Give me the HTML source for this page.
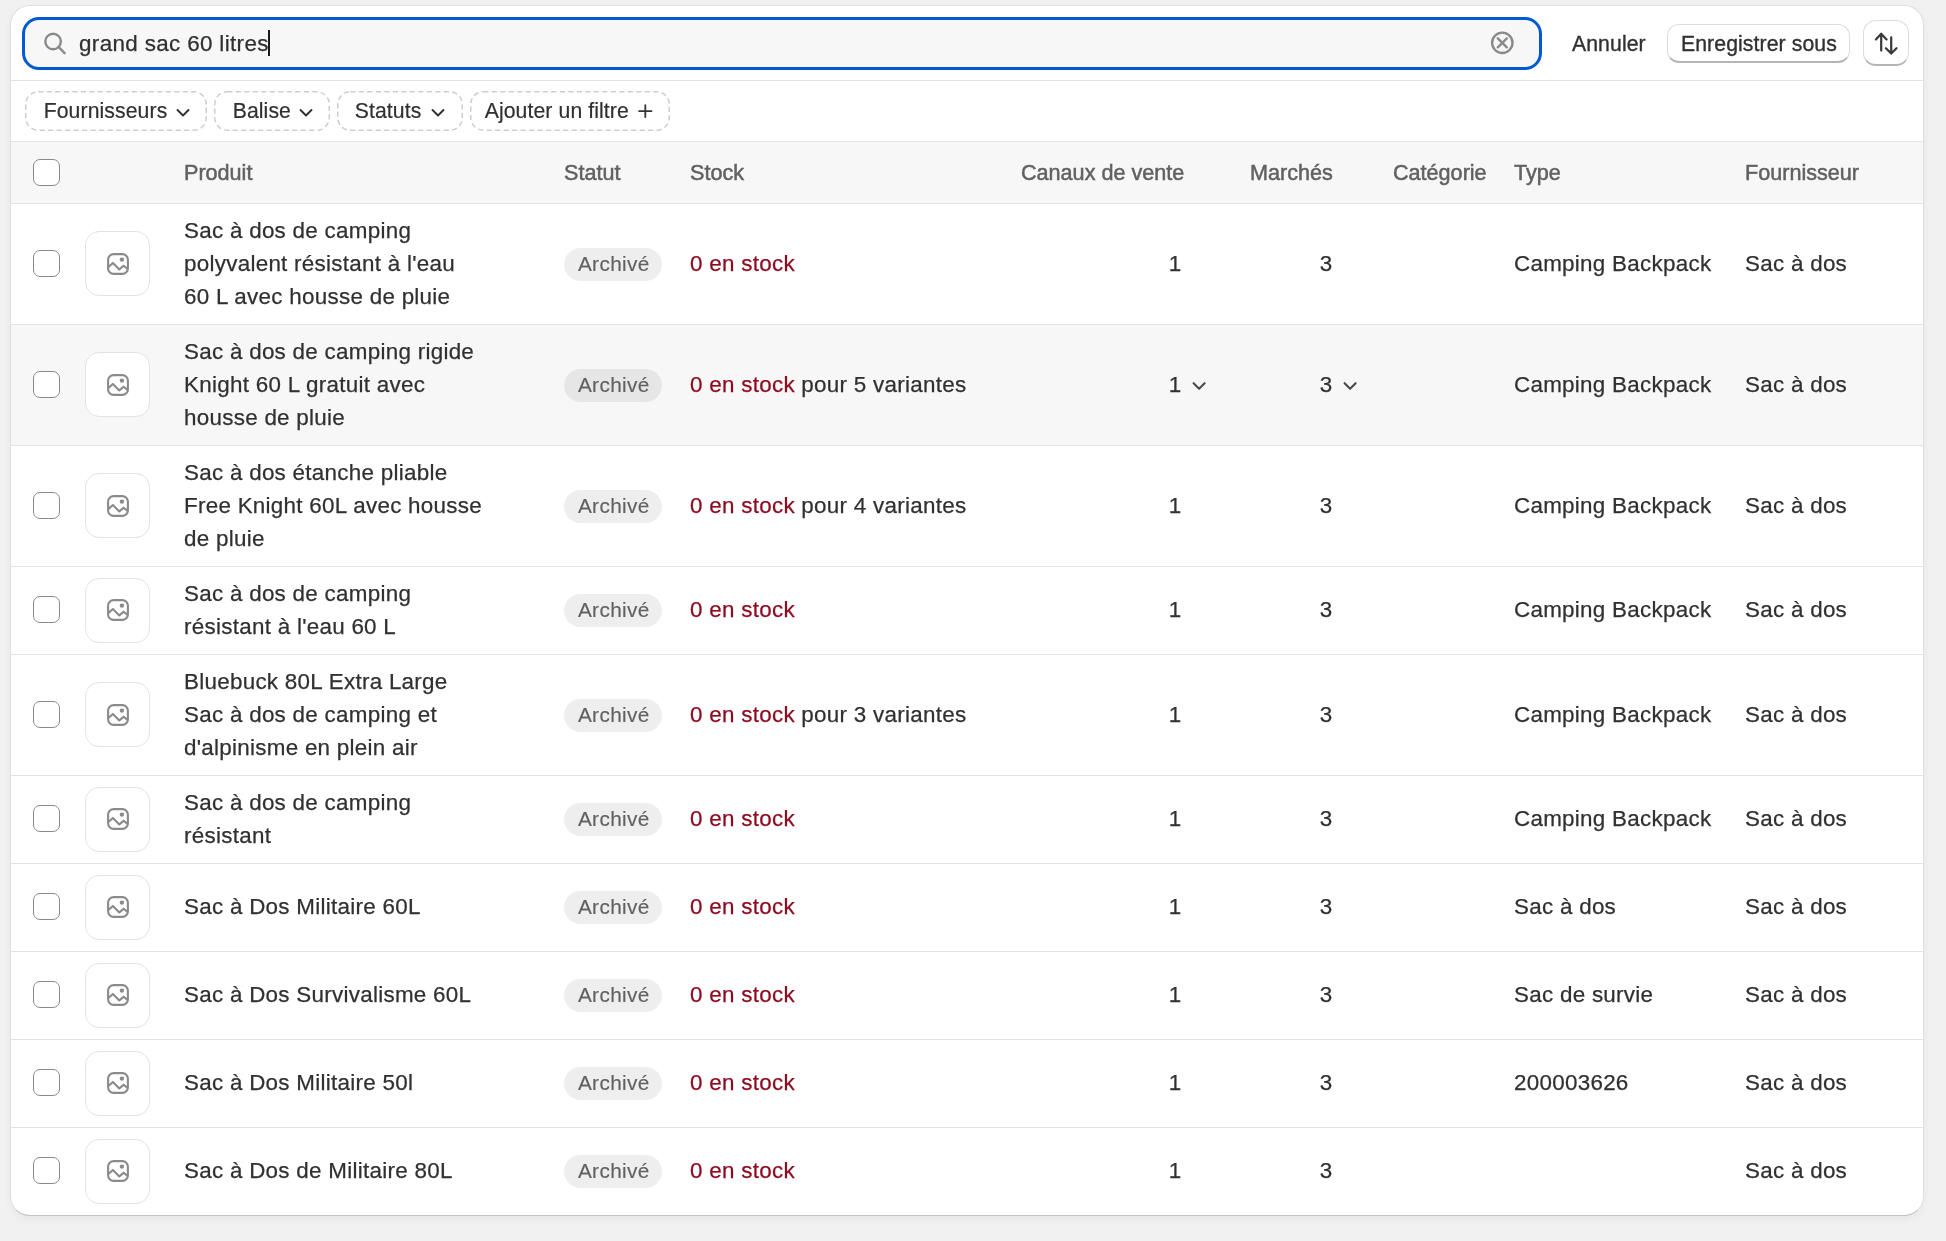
<!DOCTYPE html>
<html><head><meta charset="utf-8"><title>Produits</title>
<style>
html,body{margin:0;padding:0;}
body{width:1946px;height:1241px;background:#f1f1f1;position:relative;overflow:hidden;font-family:"Liberation Sans",sans-serif;color:#303030;}
.card{position:absolute;left:10px;top:5px;width:1914px;height:1211px;background:#fff;border-radius:20px;box-sizing:border-box;border:1.3px solid #dfdfdf;border-bottom:1.6px solid #c4c4c4;box-shadow:0 4px 9px rgba(0,0,0,0.045);overflow:hidden;}
.abs{position:absolute;}
.t{position:absolute;font-size:22.4px;letter-spacing:0.28px;line-height:33px;white-space:nowrap;color:#303030;-webkit-text-stroke:0.25px #303030;}
.crit{-webkit-text-stroke-color:#8e0b21;}
.prod{left:184px;}
.crit{color:#8e0b21;}
.row{position:absolute;left:11px;width:1912px;border-top:1px solid #e3e3e3;}
.row.hov{background:#f7f7f7;}
.cb{position:absolute;left:33px;width:27px;height:27px;box-sizing:border-box;border:1.7px solid #8a8a8a;border-radius:7px;background:#fff;}
.th{position:absolute;left:85px;width:65px;height:65px;box-sizing:border-box;border:1.6px solid #e3e3e3;border-radius:14px;background:#fff;}
.th svg{position:absolute;left:21px;top:20.5px;}
.badge{position:absolute;left:564px;width:98px;height:33px;border-radius:16.5px;background:rgba(0,0,0,0.065);color:#616161;font-size:20.8px;letter-spacing:0.35px;line-height:31px;text-align:center;text-indent:1.6px;-webkit-text-stroke:0.15px #616161;}
.badge.bh{}
.num{width:30px;text-align:center;}
.ic{position:absolute;line-height:0;}
.hd{position:absolute;font-size:21.6px;letter-spacing:0px;line-height:33px;white-space:nowrap;color:#616161;-webkit-text-stroke:0.5px #616161;}
.pill{position:absolute;top:91px;height:40px;box-sizing:border-box;border:1.6px dashed #d0d0d0;border-radius:14px;}
.s{position:absolute;font-size:21.2px;letter-spacing:0.1px;line-height:30px;white-space:nowrap;color:#303030;-webkit-text-stroke:0.2px #303030;}
#wrap{position:absolute;left:0;top:0;width:1946px;height:1241px;will-change:transform;}
</style></head><body><div id="wrap">
<div class="card"></div>
<!-- search bar -->
<div class="abs" style="left:22px;top:17px;width:1520px;height:53px;box-sizing:border-box;border:3.2px solid #005bd3;border-radius:17px;background:#f7f7f7;"></div>
<svg class="abs" style="left:40px;top:28px" width="30" height="30" viewBox="0 0 30 30" fill="none" stroke="#8a8a8a" stroke-width="2.4" stroke-linecap="round"><circle cx="13.1" cy="13.5" r="7.75"/><path d="M18.8 19.2 L24.6 25.1"/></svg>
<div class="t" style="left:79px;top:26.8px;letter-spacing:0.36px">grand sac 60 litres</div>
<div class="abs" style="left:268px;top:30px;width:1.5px;height:25.5px;background:#1a1a1a;"></div>
<svg class="abs" style="left:1489px;top:30px" width="26" height="26" viewBox="0 0 26 26" fill="none" stroke="#8a8a8a" stroke-width="2.4" stroke-linecap="round"><circle cx="13.3" cy="12.8" r="10.2"/><path d="M8.8 8.3 L17.8 17.3 M17.8 8.3 L8.8 17.3"/></svg>
<div class="s" style="left:1572px;top:29px;-webkit-text-stroke:0.35px #303030;">Annuler</div>
<div class="abs" style="left:1667px;top:24px;width:183px;height:39px;box-sizing:border-box;border:1.4px solid #dcdcdc;border-bottom:2.4px solid #b5b5b5;border-radius:12px;background:#fff;"></div>
<div class="s" style="left:1681px;top:29px;-webkit-text-stroke:0.35px #303030;">Enregistrer sous</div>
<div class="abs" style="left:1863px;top:20px;width:46px;height:46px;box-sizing:border-box;border:1.4px solid #dcdcdc;border-bottom:2.4px solid #b5b5b5;border-radius:13px;background:#fff;"></div>
<svg class="abs" style="left:1866px;top:23.8px" width="40" height="40" viewBox="0 0 40 40" fill="none" stroke="#383838" stroke-width="2.2" stroke-linecap="round" stroke-linejoin="round"><path d="M15.2 26.6 V9.8 M9.9 15.4 L15.2 9.8 L20.6 15.4"/><path d="M25.2 13.4 V29.6 M19.9 24.2 L25.2 29.6 L30.5 24.2"/></svg>
<!-- divider -->
<div class="abs" style="left:11px;top:80px;width:1912px;height:1px;background:#e3e3e3;"></div>
<!-- filter pills -->
<svg class="abs" style="left:25px;top:91px" width="182" height="40" viewBox="0 0 182 40" fill="none"><rect x="0.75" y="0.75" width="180.5" height="38.5" rx="12.5" stroke="#cdcdcd" stroke-width="1.5" stroke-dasharray="5.2 3.3"/></svg>
<div class="s" style="left:43.7px;top:95.5px;">Fournisseurs</div>
<svg class="abs" style="left:175px;top:105.85px" width="16" height="14" viewBox="0 0 16 14" fill="none" stroke="#303030" stroke-width="1.9" stroke-linecap="round" stroke-linejoin="round"><path d="M2.5 4 L8 9.5 L13.5 4"/></svg>
<svg class="abs" style="left:214px;top:91px" width="116" height="40" viewBox="0 0 116 40" fill="none"><rect x="0.75" y="0.75" width="114.5" height="38.5" rx="12.5" stroke="#cdcdcd" stroke-width="1.5" stroke-dasharray="5.2 3.3"/></svg>
<div class="s" style="left:232.7px;top:95.5px;">Balise</div>
<svg class="abs" style="left:298px;top:105.85px" width="16" height="14" viewBox="0 0 16 14" fill="none" stroke="#303030" stroke-width="1.9" stroke-linecap="round" stroke-linejoin="round"><path d="M2.5 4 L8 9.5 L13.5 4"/></svg>
<svg class="abs" style="left:337px;top:91px" width="126" height="40" viewBox="0 0 126 40" fill="none"><rect x="0.75" y="0.75" width="124.5" height="38.5" rx="12.5" stroke="#cdcdcd" stroke-width="1.5" stroke-dasharray="5.2 3.3"/></svg>
<div class="s" style="left:354.7px;top:95.5px;">Statuts</div>
<svg class="abs" style="left:430px;top:105.85px" width="16" height="14" viewBox="0 0 16 14" fill="none" stroke="#303030" stroke-width="1.9" stroke-linecap="round" stroke-linejoin="round"><path d="M2.5 4 L8 9.5 L13.5 4"/></svg>
<svg class="abs" style="left:470px;top:91px" width="200" height="40" viewBox="0 0 200 40" fill="none"><rect x="0.75" y="0.75" width="198.5" height="38.5" rx="12.5" stroke="#cdcdcd" stroke-width="1.5" stroke-dasharray="5.2 3.3"/></svg>
<div class="s" style="left:484.7px;top:95.5px;">Ajouter un filtre</div>
<svg class="abs" style="left:636px;top:103px" width="18" height="18" viewBox="0 0 18 18" fill="none" stroke="#333" stroke-width="1.8" stroke-linecap="round"><path d="M9.3 2.1 V14.1 M3.1 8.1 H15.5"/></svg>
<!-- header -->
<div class="abs" style="left:11px;top:141px;width:1912px;height:62px;background:#f7f7f7;border-top:1px solid #e3e3e3;"></div>
<div class="cb" style="top:159px"></div>
<div class="hd" style="left:184px;top:156px;">Produit</div>
<div class="hd" style="left:564px;top:156px;">Statut</div>
<div class="hd" style="left:690px;top:156px;">Stock</div>
<div class="hd" style="left:1021px;top:156px;">Canaux de vente</div>
<div class="hd" style="left:1250px;top:156px;">Marchés</div>
<div class="hd" style="left:1393px;top:156px;">Catégorie</div>
<div class="hd" style="left:1514px;top:156px;">Type</div>
<div class="hd" style="left:1745px;top:156px;">Fournisseur</div>
<div class='row' style='top:203px;height:120px;'></div>
<div class='cb' style='top:249.7px'></div>
<div class='th' style='top:231.0px'><svg width="22" height="22" viewBox="0 0 22 22" fill="none" stroke="#8a8a8a" stroke-width="2.1" stroke-linejoin="round" stroke-linecap="round"><rect x="1.1" y="1.1" width="19.8" height="19.8" rx="5.5"/><path d="M2 13.6 L5.9 10 L12.3 16.4 L16.6 12.7 L20 15.4"/><circle cx="14.9" cy="6.6" r="2.2" fill="#8a8a8a" stroke="none"/></svg></div>
<div class='t prod' style='top:213.9px'>Sac à dos de camping<br>polyvalent résistant à l&#39;eau<br>60 L avec housse de pluie</div>
<div class='badge' style='top:247.5px'>Archivé</div>
<div class='t' style='left:690px;top:246.9px'><span class='crit'>0 en stock</span></div>
<div class='t num' style='left:1160px;top:246.9px'>1</div>
<div class='t num' style='left:1311px;top:246.9px'>3</div>
<div class='t' style='left:1514px;top:246.9px'>Camping Backpack</div>
<div class='t' style='left:1745px;top:246.9px'>Sac à dos</div>
<div class='row hov' style='top:324px;height:120px;'></div>
<div class='cb' style='top:370.7px'></div>
<div class='th' style='top:352.0px'><svg width="22" height="22" viewBox="0 0 22 22" fill="none" stroke="#8a8a8a" stroke-width="2.1" stroke-linejoin="round" stroke-linecap="round"><rect x="1.1" y="1.1" width="19.8" height="19.8" rx="5.5"/><path d="M2 13.6 L5.9 10 L12.3 16.4 L16.6 12.7 L20 15.4"/><circle cx="14.9" cy="6.6" r="2.2" fill="#8a8a8a" stroke="none"/></svg></div>
<div class='t prod' style='top:334.9px'>Sac à dos de camping rigide<br>Knight 60 L gratuit avec<br>housse de pluie</div>
<div class='badge bh' style='top:368.5px'>Archivé</div>
<div class='t' style='left:690px;top:367.9px'><span class='crit'>0 en stock</span> pour 5 variantes</div>
<div class='t num' style='left:1160px;top:367.9px'>1</div>
<div class='t num' style='left:1311px;top:367.9px'>3</div>
<div class='ic' style='left:1192px;top:380.5px'><svg width="16" height="11" viewBox="0 0 16 11" fill="none" stroke="#4a4a4a" stroke-width="2.1" stroke-linecap="round" stroke-linejoin="round"><path d="M1.6 2.2 L7.1 7.7 L12.6 2.2"/></svg></div>
<div class='ic' style='left:1343px;top:380.5px'><svg width="16" height="11" viewBox="0 0 16 11" fill="none" stroke="#4a4a4a" stroke-width="2.1" stroke-linecap="round" stroke-linejoin="round"><path d="M1.6 2.2 L7.1 7.7 L12.6 2.2"/></svg></div>
<div class='t' style='left:1514px;top:367.9px'>Camping Backpack</div>
<div class='t' style='left:1745px;top:367.9px'>Sac à dos</div>
<div class='row' style='top:445px;height:120px;'></div>
<div class='cb' style='top:491.7px'></div>
<div class='th' style='top:473.0px'><svg width="22" height="22" viewBox="0 0 22 22" fill="none" stroke="#8a8a8a" stroke-width="2.1" stroke-linejoin="round" stroke-linecap="round"><rect x="1.1" y="1.1" width="19.8" height="19.8" rx="5.5"/><path d="M2 13.6 L5.9 10 L12.3 16.4 L16.6 12.7 L20 15.4"/><circle cx="14.9" cy="6.6" r="2.2" fill="#8a8a8a" stroke="none"/></svg></div>
<div class='t prod' style='top:455.9px'>Sac à dos étanche pliable<br>Free Knight 60L avec housse<br>de pluie</div>
<div class='badge' style='top:489.5px'>Archivé</div>
<div class='t' style='left:690px;top:488.9px'><span class='crit'>0 en stock</span> pour 4 variantes</div>
<div class='t num' style='left:1160px;top:488.9px'>1</div>
<div class='t num' style='left:1311px;top:488.9px'>3</div>
<div class='t' style='left:1514px;top:488.9px'>Camping Backpack</div>
<div class='t' style='left:1745px;top:488.9px'>Sac à dos</div>
<div class='row' style='top:566px;height:87px;'></div>
<div class='cb' style='top:596.2px'></div>
<div class='th' style='top:577.5px'><svg width="22" height="22" viewBox="0 0 22 22" fill="none" stroke="#8a8a8a" stroke-width="2.1" stroke-linejoin="round" stroke-linecap="round"><rect x="1.1" y="1.1" width="19.8" height="19.8" rx="5.5"/><path d="M2 13.6 L5.9 10 L12.3 16.4 L16.6 12.7 L20 15.4"/><circle cx="14.9" cy="6.6" r="2.2" fill="#8a8a8a" stroke="none"/></svg></div>
<div class='t prod' style='top:576.9px'>Sac à dos de camping<br>résistant à l&#39;eau 60 L</div>
<div class='badge' style='top:594.0px'>Archivé</div>
<div class='t' style='left:690px;top:593.4px'><span class='crit'>0 en stock</span></div>
<div class='t num' style='left:1160px;top:593.4px'>1</div>
<div class='t num' style='left:1311px;top:593.4px'>3</div>
<div class='t' style='left:1514px;top:593.4px'>Camping Backpack</div>
<div class='t' style='left:1745px;top:593.4px'>Sac à dos</div>
<div class='row' style='top:654px;height:120px;'></div>
<div class='cb' style='top:700.7px'></div>
<div class='th' style='top:682.0px'><svg width="22" height="22" viewBox="0 0 22 22" fill="none" stroke="#8a8a8a" stroke-width="2.1" stroke-linejoin="round" stroke-linecap="round"><rect x="1.1" y="1.1" width="19.8" height="19.8" rx="5.5"/><path d="M2 13.6 L5.9 10 L12.3 16.4 L16.6 12.7 L20 15.4"/><circle cx="14.9" cy="6.6" r="2.2" fill="#8a8a8a" stroke="none"/></svg></div>
<div class='t prod' style='top:664.9px'>Bluebuck 80L Extra Large<br>Sac à dos de camping et<br>d&#39;alpinisme en plein air</div>
<div class='badge' style='top:698.5px'>Archivé</div>
<div class='t' style='left:690px;top:697.9px'><span class='crit'>0 en stock</span> pour 3 variantes</div>
<div class='t num' style='left:1160px;top:697.9px'>1</div>
<div class='t num' style='left:1311px;top:697.9px'>3</div>
<div class='t' style='left:1514px;top:697.9px'>Camping Backpack</div>
<div class='t' style='left:1745px;top:697.9px'>Sac à dos</div>
<div class='row' style='top:775px;height:87px;'></div>
<div class='cb' style='top:805.2px'></div>
<div class='th' style='top:786.5px'><svg width="22" height="22" viewBox="0 0 22 22" fill="none" stroke="#8a8a8a" stroke-width="2.1" stroke-linejoin="round" stroke-linecap="round"><rect x="1.1" y="1.1" width="19.8" height="19.8" rx="5.5"/><path d="M2 13.6 L5.9 10 L12.3 16.4 L16.6 12.7 L20 15.4"/><circle cx="14.9" cy="6.6" r="2.2" fill="#8a8a8a" stroke="none"/></svg></div>
<div class='t prod' style='top:785.9px'>Sac à dos de camping<br>résistant</div>
<div class='badge' style='top:803.0px'>Archivé</div>
<div class='t' style='left:690px;top:802.4px'><span class='crit'>0 en stock</span></div>
<div class='t num' style='left:1160px;top:802.4px'>1</div>
<div class='t num' style='left:1311px;top:802.4px'>3</div>
<div class='t' style='left:1514px;top:802.4px'>Camping Backpack</div>
<div class='t' style='left:1745px;top:802.4px'>Sac à dos</div>
<div class='row' style='top:863px;height:87px;'></div>
<div class='cb' style='top:893.2px'></div>
<div class='th' style='top:874.5px'><svg width="22" height="22" viewBox="0 0 22 22" fill="none" stroke="#8a8a8a" stroke-width="2.1" stroke-linejoin="round" stroke-linecap="round"><rect x="1.1" y="1.1" width="19.8" height="19.8" rx="5.5"/><path d="M2 13.6 L5.9 10 L12.3 16.4 L16.6 12.7 L20 15.4"/><circle cx="14.9" cy="6.6" r="2.2" fill="#8a8a8a" stroke="none"/></svg></div>
<div class='t prod' style='top:890.4px'>Sac à Dos Militaire 60L</div>
<div class='badge' style='top:891.0px'>Archivé</div>
<div class='t' style='left:690px;top:890.4px'><span class='crit'>0 en stock</span></div>
<div class='t num' style='left:1160px;top:890.4px'>1</div>
<div class='t num' style='left:1311px;top:890.4px'>3</div>
<div class='t' style='left:1514px;top:890.4px'>Sac à dos</div>
<div class='t' style='left:1745px;top:890.4px'>Sac à dos</div>
<div class='row' style='top:951px;height:87px;'></div>
<div class='cb' style='top:981.2px'></div>
<div class='th' style='top:962.5px'><svg width="22" height="22" viewBox="0 0 22 22" fill="none" stroke="#8a8a8a" stroke-width="2.1" stroke-linejoin="round" stroke-linecap="round"><rect x="1.1" y="1.1" width="19.8" height="19.8" rx="5.5"/><path d="M2 13.6 L5.9 10 L12.3 16.4 L16.6 12.7 L20 15.4"/><circle cx="14.9" cy="6.6" r="2.2" fill="#8a8a8a" stroke="none"/></svg></div>
<div class='t prod' style='top:978.4px'>Sac à Dos Survivalisme 60L</div>
<div class='badge' style='top:979.0px'>Archivé</div>
<div class='t' style='left:690px;top:978.4px'><span class='crit'>0 en stock</span></div>
<div class='t num' style='left:1160px;top:978.4px'>1</div>
<div class='t num' style='left:1311px;top:978.4px'>3</div>
<div class='t' style='left:1514px;top:978.4px'>Sac de survie</div>
<div class='t' style='left:1745px;top:978.4px'>Sac à dos</div>
<div class='row' style='top:1039px;height:87px;'></div>
<div class='cb' style='top:1069.2px'></div>
<div class='th' style='top:1050.5px'><svg width="22" height="22" viewBox="0 0 22 22" fill="none" stroke="#8a8a8a" stroke-width="2.1" stroke-linejoin="round" stroke-linecap="round"><rect x="1.1" y="1.1" width="19.8" height="19.8" rx="5.5"/><path d="M2 13.6 L5.9 10 L12.3 16.4 L16.6 12.7 L20 15.4"/><circle cx="14.9" cy="6.6" r="2.2" fill="#8a8a8a" stroke="none"/></svg></div>
<div class='t prod' style='top:1066.4px'>Sac à Dos Militaire 50l</div>
<div class='badge' style='top:1067.0px'>Archivé</div>
<div class='t' style='left:690px;top:1066.4px'><span class='crit'>0 en stock</span></div>
<div class='t num' style='left:1160px;top:1066.4px'>1</div>
<div class='t num' style='left:1311px;top:1066.4px'>3</div>
<div class='t' style='left:1514px;top:1066.4px'>200003626</div>
<div class='t' style='left:1745px;top:1066.4px'>Sac à dos</div>
<div class='row' style='top:1127px;height:87px;'></div>
<div class='cb' style='top:1157.2px'></div>
<div class='th' style='top:1138.5px'><svg width="22" height="22" viewBox="0 0 22 22" fill="none" stroke="#8a8a8a" stroke-width="2.1" stroke-linejoin="round" stroke-linecap="round"><rect x="1.1" y="1.1" width="19.8" height="19.8" rx="5.5"/><path d="M2 13.6 L5.9 10 L12.3 16.4 L16.6 12.7 L20 15.4"/><circle cx="14.9" cy="6.6" r="2.2" fill="#8a8a8a" stroke="none"/></svg></div>
<div class='t prod' style='top:1154.4px'>Sac à Dos de Militaire 80L</div>
<div class='badge' style='top:1155.0px'>Archivé</div>
<div class='t' style='left:690px;top:1154.4px'><span class='crit'>0 en stock</span></div>
<div class='t num' style='left:1160px;top:1154.4px'>1</div>
<div class='t num' style='left:1311px;top:1154.4px'>3</div>
<div class='t' style='left:1745px;top:1154.4px'>Sac à dos</div>
</div></body></html>
